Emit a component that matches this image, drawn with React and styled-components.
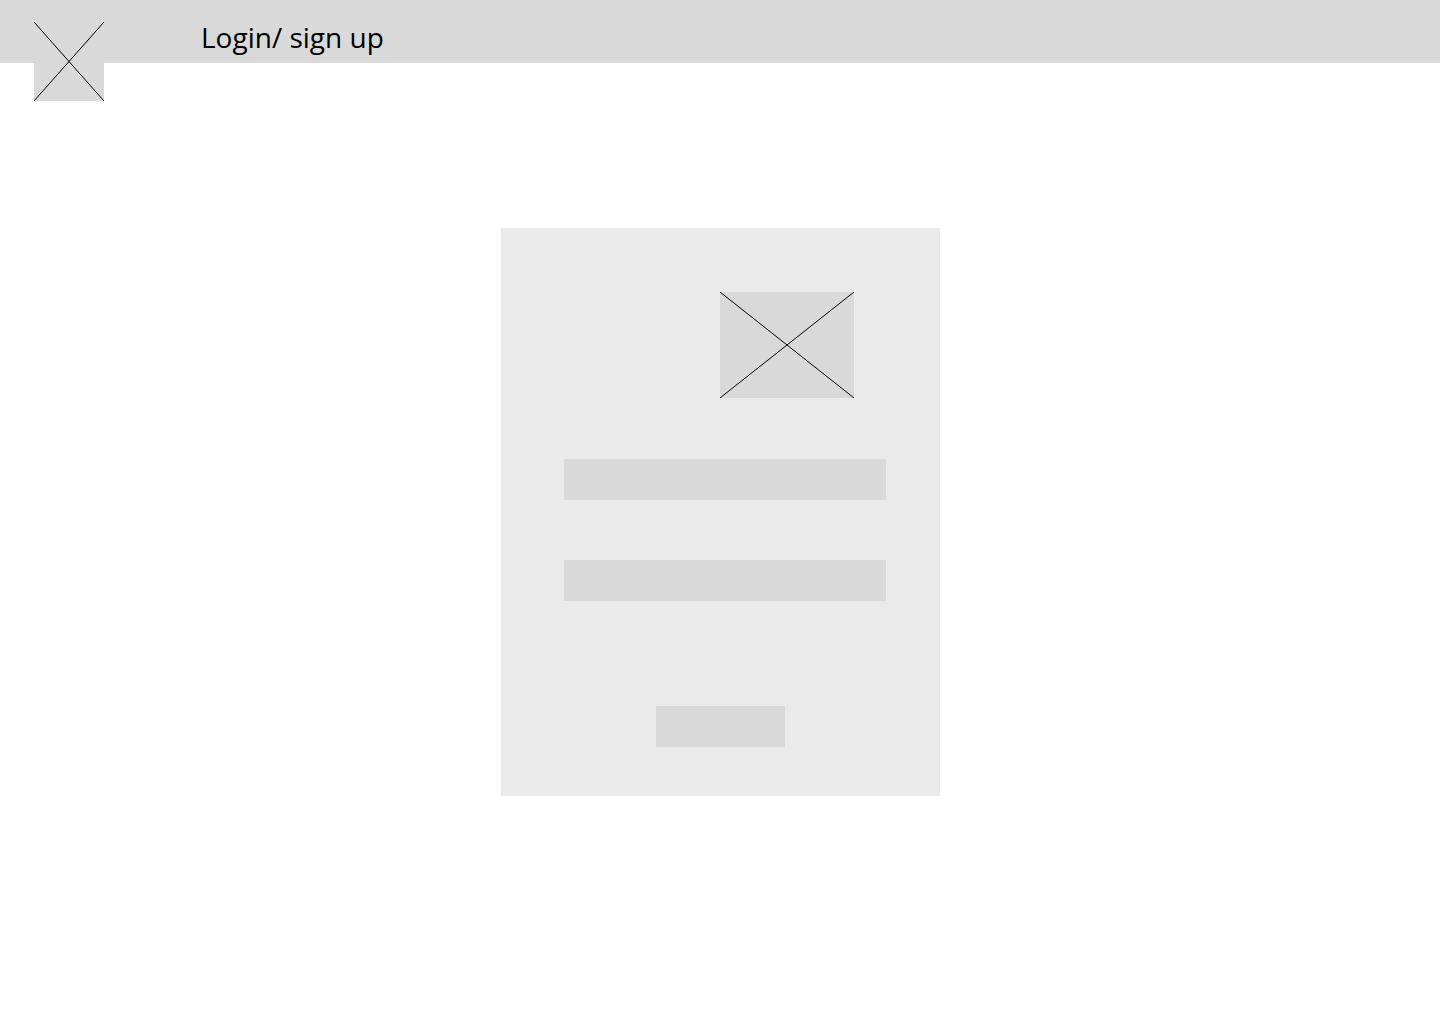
import styled, { createGlobalStyle } from 'styled-components';

const GlobalStyle = createGlobalStyle`
  html, body {
    margin: 0;
    padding: 0;
    background: #ffffff;
  }
  body {
    font-family: 'Open Sans', 'Liberation Sans', sans-serif;
  }
`;

const Placeholder = ({ className }) => (
  <PlaceholderBox className={className}>
    <svg width="100%" height="100%" viewBox="0 0 100 100" preserveAspectRatio="none">
      <line x1="0" y1="0" x2="100" y2="100" stroke="#000" strokeWidth="1" vectorEffect="non-scaling-stroke" />
      <line x1="100" y1="0" x2="0" y2="100" stroke="#000" strokeWidth="1" vectorEffect="non-scaling-stroke" />
    </svg>
  </PlaceholderBox>
);

const App = () => {
  return (
    <Page>
      <GlobalStyle />
      <Header>
        <Logo />
        <Title>Login/ sign up</Title>
      </Header>
      <Main>
        <Card>
          <CardImage />
          <Field />
          <Field />
          <SubmitButton />
        </Card>
      </Main>
    </Page>
  );
};

const Page = styled.div`
  min-height: 100vh;
  background: #ffffff;
`;

const PlaceholderBox = styled.div`
  background: #d9d9d9;
  flex-shrink: 0;
  svg {
    display: block;
  }
`;

const Header = styled.header`
  display: flex;
  align-items: flex-start;
  height: 63px;
  background: #d9d9d9;
  padding-left: 34px;
`;

const Logo = styled(Placeholder)`
  width: 70px;
  height: 79px;
  margin-top: 22px;
  position: relative;
  z-index: 1;
`;

const Title = styled.h1`
  margin: 0 0 0 97px;
  padding-top: 19px;
  font-size: 28px;
  font-weight: 400;
  line-height: 1.3;
  color: #000;
`;

const Main = styled.main`
  display: flex;
  justify-content: center;
  padding-top: 165px;
`;

const Card = styled.section`
  display: flex;
  flex-direction: column;
  width: 439px;
  box-sizing: border-box;
  padding: 64px 54px 49px 63px;
  background: #eaeaea;
`;

const CardImage = styled(Placeholder)`
  width: 134px;
  height: 106px;
  margin-left: 156px;
  margin-bottom: 61px;
`;

const Field = styled.div`
  height: 41px;
  background: #d9d9d9;
  & + & {
    margin-top: 60px;
  }
`;

const SubmitButton = styled.div`
  align-self: flex-start;
  width: 129px;
  height: 41px;
  margin: 105px 0 0 92px;
  background: #d9d9d9;
`;

export default App;
